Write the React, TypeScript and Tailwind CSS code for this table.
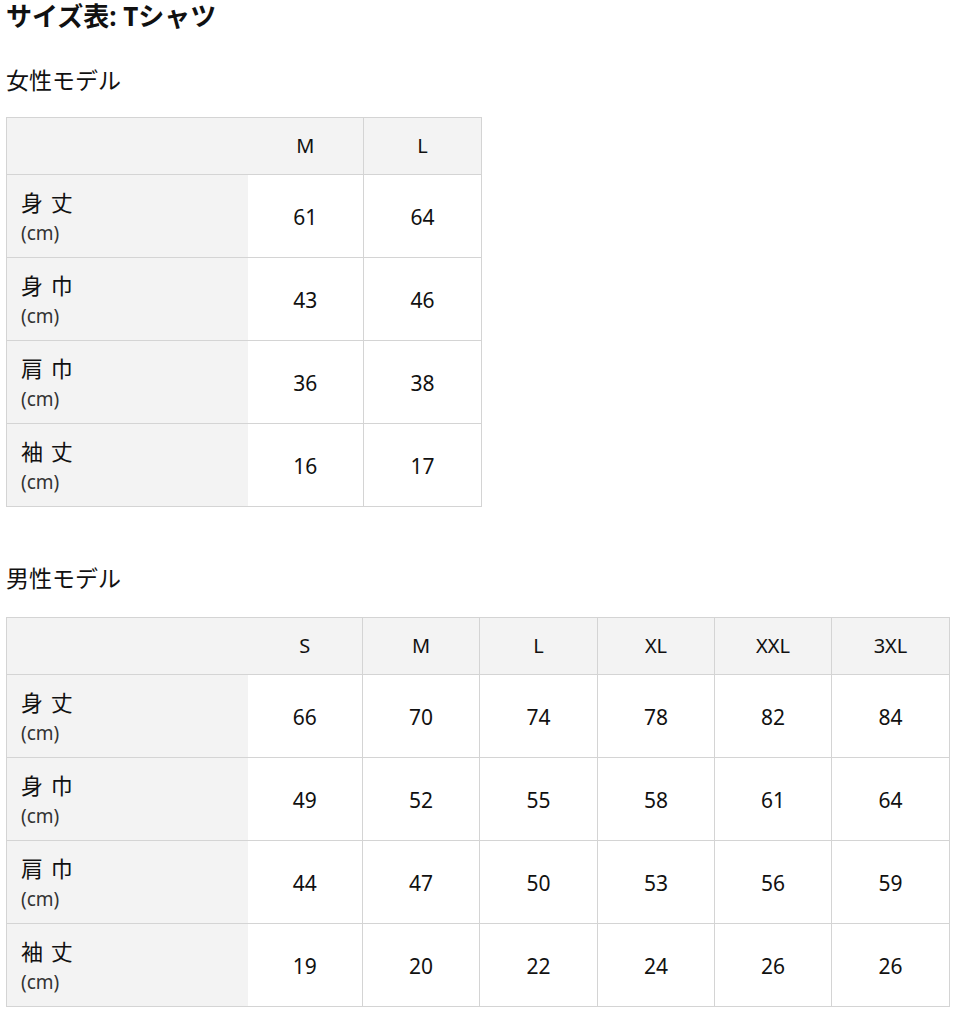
import React from 'react';

interface SizeTableProps {
  sizes: string[];
  widths: number[];
  rows: { label: string; values: number[] }[];
}

const FONT = '"Noto Sans", "Noto Sans CJK JP", sans-serif';

const SizeTable: React.FC<SizeTableProps> = ({ sizes, widths, rows }) => {
  const total = 241 + widths.reduce((a, b) => a + b, 0);
  return (
    <table className="border-collapse table-fixed border border-[#d4d4d4] text-[#111]" style={{ width: total }}>
      <colgroup>
        <col style={{ width: 241 }} />
        {widths.map((w, i) => (
          <col key={i} style={{ width: w }} />
        ))}
      </colgroup>
      <thead>
        <tr className="h-[57px] bg-[#f3f3f3] border-b border-[#d4d4d4]">
          <th className="p-0" />
          {sizes.map((s, i) => (
            <th key={s} className={`p-0 font-normal text-[20px] text-center ${i > 0 ? 'border-l border-[#d4d4d4]' : ''}`}>
              {s}
            </th>
          ))}
        </tr>
      </thead>
      <tbody>
        {rows.map((r) => (
          <tr key={r.label} className="h-[83px] border-b border-[#d4d4d4] last:border-b-0">
            <td className="p-0 pl-[14px] bg-[#f3f3f3] align-middle">
              <div className="text-[22px] leading-[30px] tracking-[1px]">{r.label}</div>
              <div className="text-[19px] leading-[26px] mt-[3px] text-[#333]">(cm)</div>
            </td>
            {r.values.map((v, i) => (
              <td key={i} className={`p-0 pt-[4px] text-center text-[21px] bg-white ${i > 0 ? 'border-l border-[#d4d4d4]' : ''}`}>
                {v}
              </td>
            ))}
          </tr>
        ))}
      </tbody>
    </table>
  );
};

export default function App() {
  return (
    <div className="bg-white min-h-[1030px] pl-[6px] text-[#111]" style={{ fontFamily: FONT }}>
      <h1 className="text-[26px] font-bold leading-[32px] m-0">サイズ表: Tシャツ</h1>
      <h2 className="text-[23px] font-normal leading-[30px] mt-[33px] mb-[22px]">女性モデル</h2>
      <SizeTable
        sizes={['M', 'L']}
        widths={[116, 118]}
        rows={[
          { label: '身 丈', values: [61, 64] },
          { label: '身 巾', values: [43, 46] },
          { label: '肩 巾', values: [36, 38] },
          { label: '袖 丈', values: [16, 17] },
        ]}
      />
      <h2 className="text-[23px] font-normal leading-[30px] mt-[56px] mb-[24px]">男性モデル</h2>
      <SizeTable
        sizes={['S', 'M', 'L', 'XL', 'XXL', '3XL']}
        widths={[115, 117, 118, 117, 117, 118]}
        rows={[
          { label: '身 丈', values: [66, 70, 74, 78, 82, 84] },
          { label: '身 巾', values: [49, 52, 55, 58, 61, 64] },
          { label: '肩 巾', values: [44, 47, 50, 53, 56, 59] },
          { label: '袖 丈', values: [19, 20, 22, 24, 26, 26] },
        ]}
      />
    </div>
  );
}
